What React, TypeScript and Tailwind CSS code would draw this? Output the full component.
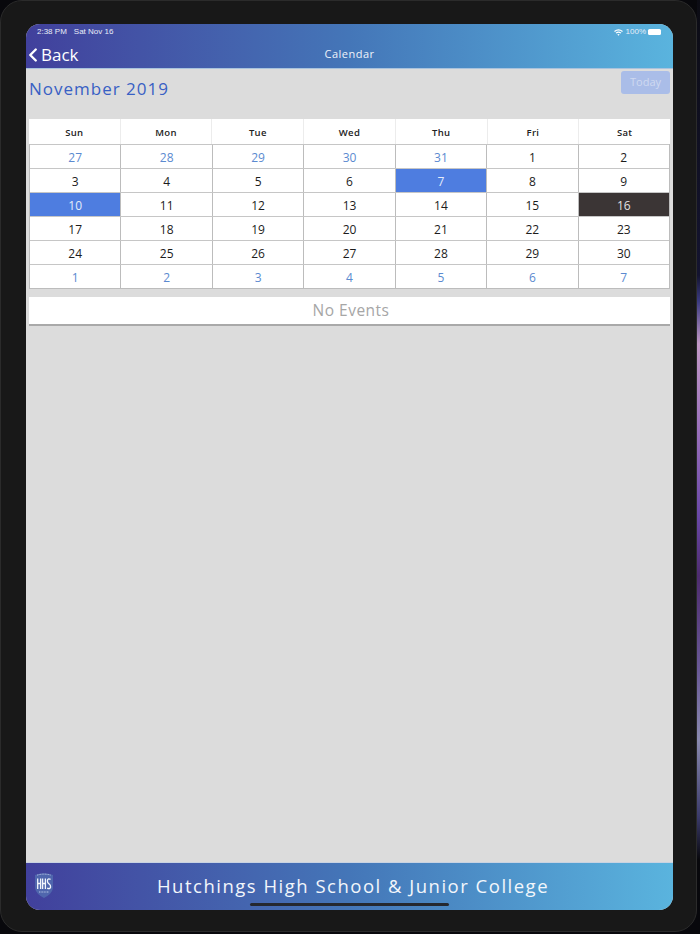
import React from 'react';
import { ChevronLeft } from 'lucide-react';

type Day = { label: number; muted?: boolean; tone?: 'selected' | 'today' | 'current' };

const weekDays = ['Sun', 'Mon', 'Tue', 'Wed', 'Thu', 'Fri', 'Sat'];

const weeks: Day[][] = [
  [{ label: 27, muted: true }, { label: 28, muted: true }, { label: 29, muted: true }, { label: 30, muted: true }, { label: 31, muted: true }, { label: 1 }, { label: 2 }],
  [{ label: 3 }, { label: 4 }, { label: 5 }, { label: 6 }, { label: 7, tone: 'current' }, { label: 8 }, { label: 9 }],
  [{ label: 10, tone: 'selected' }, { label: 11 }, { label: 12 }, { label: 13 }, { label: 14 }, { label: 15 }, { label: 16, tone: 'today' }],
  [{ label: 17 }, { label: 18 }, { label: 19 }, { label: 20 }, { label: 21 }, { label: 22 }, { label: 23 }],
  [{ label: 24 }, { label: 25 }, { label: 26 }, { label: 27 }, { label: 28 }, { label: 29 }, { label: 30 }],
  [{ label: 1, muted: true }, { label: 2, muted: true }, { label: 3, muted: true }, { label: 4, muted: true }, { label: 5, muted: true }, { label: 6, muted: true }, { label: 7, muted: true }],
];

const dayClass = (day: Day) => {
  if (day.tone === 'selected' || day.tone === 'current') return 'bg-[#4e7de0] text-[#e4ecfa]';
  if (day.tone === 'today') return 'bg-[#3b3535] text-[#e2e0e0]';
  if (day.muted) return 'bg-white text-[#5b8ad0]';
  return 'bg-white text-[#1c1c1c]';
};

const SchoolCrest = () => (
  <svg width="20" height="27" viewBox="0 0 20 27" fill="none">
    <path d="M1 3 Q10 -0.5 19 3 V16 Q18 22 10 26 Q2 22 1 16 Z" fill="#4f66ad" />
    <path d="M3 3.2 Q10 1 17 3.2" stroke="#b4c3e4" strokeWidth="1" strokeDasharray="1 0.6" />
    <path d="M3.7 6.5 V17 M6.6 6.5 V17 M3.7 11.5 H6.6 M8.6 6.5 V17 M11.4 6.5 V17 M8.6 11.5 H11.4" stroke="#f3f6fc" strokeWidth="1.3" />
    <path d="M16.6 7.4 Q13.4 6 13.4 9 Q13.4 11 15 11.8 Q16.8 13 16.6 15 Q16 17.6 13.2 16.2" stroke="#f3f6fc" strokeWidth="1.3" />
    <path d="M5 20 H15" stroke="#b4c3e4" strokeWidth="1" strokeDasharray="1 0.6" />
  </svg>
);

const WifiIcon = () => (
  <svg width="9" height="7" viewBox="0 0 18 14" fill="none" stroke="#fff" strokeWidth="2.4">
    <path d="M1 5 Q9 -1.6 17 5" />
    <path d="M4 8.2 Q9 4 14 8.2" />
    <path d="M9 13.6 L6.6 11 Q9 9.2 11.4 11 Z" fill="#fff" stroke="none" />
  </svg>
);

const App: React.FC = () => {
  return (
    <div className="w-[700px] h-[934px] flex bg-[#08080c] overflow-hidden font-['Open_Sans',sans-serif]">
      <div className="w-[697px] h-[932px] shrink-0 bg-[#181818] rounded-[22px] border border-[#2b2b2b] pl-[25px] pr-[23px] pt-[23px] pb-[21px]">
        <div className="relative h-full rounded-[14px] overflow-hidden bg-[#dcdcdc] flex flex-col">
          <header className="h-[45px] shrink-0 bg-gradient-to-r from-[#41409c] via-[#4476b8] to-[#5ab4de] text-white border-b border-[#a9c3dd]">
            <div className="h-[16px] flex items-center justify-between pl-[11px] pr-[12px] text-[8px] font-['Liberation_Sans',sans-serif] text-[#e8edf8]">
              <div className="flex gap-[7px]">
                <span>2:38 PM</span>
                <span>Sat Nov 16</span>
              </div>
              <div className="flex items-center gap-[2px]">
                <WifiIcon />
                <span className="ml-[1px]">100%</span>
                <span className="w-[13px] h-[6px] bg-white rounded-[1.5px]" />
              </div>
            </div>
            <div className="relative h-[28px] flex items-center justify-center">
              <div className="absolute -left-[2px] top-[2px] flex items-center">
                <ChevronLeft size={22} strokeWidth={2.6} className="-mr-[3px] -ml-[2px]" />
                <span className="text-[17px] leading-[26px]">Back</span>
              </div>
              <span className="text-[11px] tracking-[0.5px] text-[#eef3fa]">Calendar</span>
            </div>
          </header>

          <main className="flex-1 px-[3px]">
            <div className="h-[50px] flex items-start justify-between">
              <h1 className="pt-[8px] text-[17px] leading-[24px] font-medium tracking-[1px] text-[#3860c4]">November 2019</h1>
              <button className="mt-[2px] w-[49px] h-[23px] bg-[#aabde8] rounded-[3px] text-[11px] text-[#cfd9f0]">Today</button>
            </div>

            <div className="w-[641px] bg-[#c4c4c4]">
              <div className="grid grid-cols-7 gap-x-px h-[25px] bg-[#ececec]">
                {weekDays.map(name => (
                  <div key={name} className="bg-white flex items-center justify-center pt-[3px] text-[9.5px] font-semibold tracking-[0.3px] text-[#222]">
                    {name}
                  </div>
                ))}
              </div>
              <div className="border border-t-0 border-[#bcbcbc]">
                {weeks.map((week, i) => (
                  <div key={i} className="grid grid-cols-7 gap-x-px h-[24px] bg-[#bcbcbc] border-t border-[#c6c6c6]">
                    {week.map((day, j) => (
                      <div key={j} className={`flex items-center justify-center pt-[2px] text-[12px] ${dayClass(day)}`}>
                        {day.label}
                      </div>
                    ))}
                  </div>
                ))}
              </div>
            </div>

            <div className="mt-[8px] w-[641px] h-[29px] bg-white border-b-2 border-[#a9a9a9] flex items-center justify-center pl-[3px] text-[15.5px] tracking-[0.5px] text-[#a6a6a6]">
              No Events
            </div>
          </main>

          <footer className="relative h-[48px] shrink-0 bg-gradient-to-r from-[#41409c] via-[#4476b8] to-[#5ab4de] border-t border-[#c9d3e2] flex items-center">
            <div className="ml-[8px] -mt-[2px] w-[20px]">
              <SchoolCrest />
            </div>
            <div className="flex-1 text-center pr-[21px] -mt-[2px] text-[18.5px] font-medium tracking-[1.5px] text-[#f2f6fb]">
              Hutchings High School &amp; Junior College
            </div>
            <div className="absolute left-[224px] bottom-[4px] w-[199px] h-[3px] rounded-full bg-[#25282f]" />
          </footer>
        </div>
      </div>
      {/* sliver of wallpaper past the tablet edge */}
      <div className="flex-1 h-[860px] bg-[linear-gradient(to_bottom,#0c0c14_0%,#141430_32%,#3a3a80_35%,#c49ac8_40%,#9a70bc_50%,#6a48a8_60%,#4e2c70_67%,#6a5a98_78%,#8a8ab0_86%,#3a3a6a_95%,#08080c_100%)]" />
    </div>
  );
};

export default App;
